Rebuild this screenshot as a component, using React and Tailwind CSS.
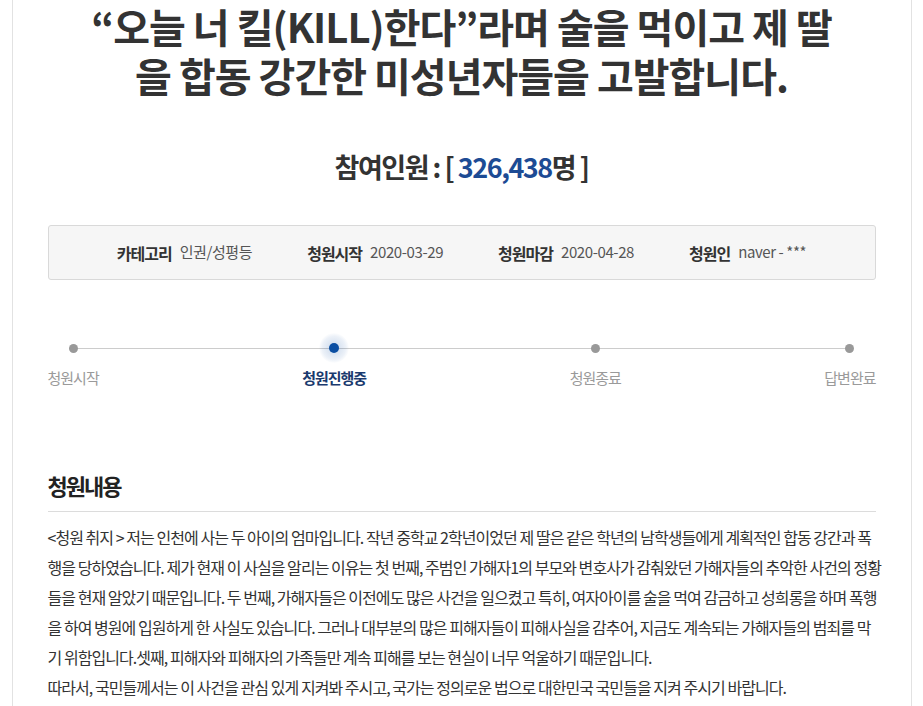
import React from 'react';

const info = [
  { label: '카테고리', value: '인권/성평등' },
  { label: '청원시작', value: '2020-03-29' },
  { label: '청원마감', value: '2020-04-28' },
  { label: '청원인', value: 'naver - ***' },
];

const steps = [
  { name: '청원시작', active: false },
  { name: '청원진행중', active: true },
  { name: '청원종료', active: false },
  { name: '답변완료', active: false },
];

const body = [
  '<청원 취지 > 저는 인천에 사는 두 아이의 엄마입니다. 작년 중학교 2학년이었던 제 딸은 같은 학년의 남학생들에게 계획적인 합동 강간과 폭',
  '행을 당하였습니다. 제가 현재 이 사실을 알리는 이유는 첫 번째, 주범인 가해자1의 부모와 변호사가 감춰왔던 가해자들의 추악한 사건의 정황',
  '들을 현재 알았기 때문입니다. 두 번째, 가해자들은 이전에도 많은 사건을 일으켰고 특히, 여자아이를 술을 먹여 감금하고 성희롱을 하며 폭행',
  '을 하여 병원에 입원하게 한 사실도 있습니다. 그러나 대부분의 많은 피해자들이 피해사실을 감추어, 지금도 계속되는 가해자들의 범죄를 막',
  '기 위함입니다.셋째, 피해자와 피해자의 가족들만 계속 피해를 보는 현실이 너무 억울하기 때문입니다.',
  '따라서, 국민들께서는 이 사건을 관심 있게 지켜봐 주시고, 국가는 정의로운 법으로 대한민국 국민들을 지켜 주시기 바랍니다.',
];

export default function App() {
  return (
    <div className="min-h-screen bg-white font-['Noto_Sans_CJK_KR','Noto_Sans',sans-serif]">
      <div className="mx-auto w-[900px] border-x border-[#e2e2e2] px-[35px] pb-[40px]">
        {/* Title */}
        <h1 className="pt-[2px] text-center text-[40px] leading-[49px] font-bold tracking-[-1px] text-[#333]">
          <span className="block whitespace-nowrap">“오늘 너 킬(KILL)한다”라며 술을 먹이고 제 딸</span>
          <span className="block whitespace-nowrap">을 합동 강간한 미성년자들을 고발합니다.</span>
        </h1>

        {/* Participants */}
        <div className="mt-[47px] text-center text-[27px] leading-[40px] font-bold tracking-[-1.5px] text-[#333]">
          참여인원 : [ <span className="text-[#1d4b94]">326,438</span>명 ]
        </div>

        {/* Info box */}
        <div className="mt-[38px] flex h-[55px] items-center justify-center gap-[55px] rounded-[3px] border border-[#d9d9d9] bg-[#f6f6f6]">
          {info.map((item) => (
            <div key={item.label} className="flex items-center gap-[8px]">
              <span className="text-[16px] font-bold tracking-[-1px] text-[#333]">{item.label}</span>
              <span className="text-[15px] tracking-[-0.4px] text-[#555]">{item.value}</span>
            </div>
          ))}
        </div>

        {/* Progress */}
        <div className="relative mt-[53px]">
          <div className="absolute left-[27px] right-[27px] top-[15px] h-px bg-[#cccccc]" />
          <div className="relative flex justify-between">
            {steps.map((s) => (
              <div key={s.name} className="flex flex-col items-center">
                <div className="flex h-[30px] w-[30px] items-center justify-center">
                  {s.active ? (
                    <div className="flex h-[30px] w-[30px] items-center justify-center rounded-full bg-[radial-gradient(circle,rgba(13,78,166,0.22)_0%,rgba(13,78,166,0.08)_55%,rgba(13,78,166,0)_72%)]">
                      <div className="h-[10px] w-[10px] rounded-full bg-[#0b4ea2]" />
                    </div>
                  ) : (
                    <div className="h-[9px] w-[9px] rounded-full bg-[#999]" />
                  )}
                </div>
                <div
                  className={
                    s.active
                      ? 'mt-[4px] text-[15px] leading-[22px] font-bold tracking-[-1px] text-[#1a3a6e]'
                      : 'mt-[4px] text-[15px] leading-[22px] tracking-[-1px] text-[#9a9a9a]'
                  }
                >
                  {s.name}
                </div>
              </div>
            ))}
          </div>
        </div>

        {/* Content */}
        <h2 className="mt-[81px] border-b border-[#dcdcdc] pb-[11px] text-[22px] leading-[30px] font-bold tracking-[-2px] text-[#222]">
          청원내용
        </h2>
        <div className="mt-[10px] text-[16px] leading-[30px] tracking-[-0.95px] text-[#333]">
          {body.map((line, i) => (
            <p key={i} className="whitespace-nowrap">{line}</p>
          ))}
        </div>
      </div>
    </div>
  );
}
